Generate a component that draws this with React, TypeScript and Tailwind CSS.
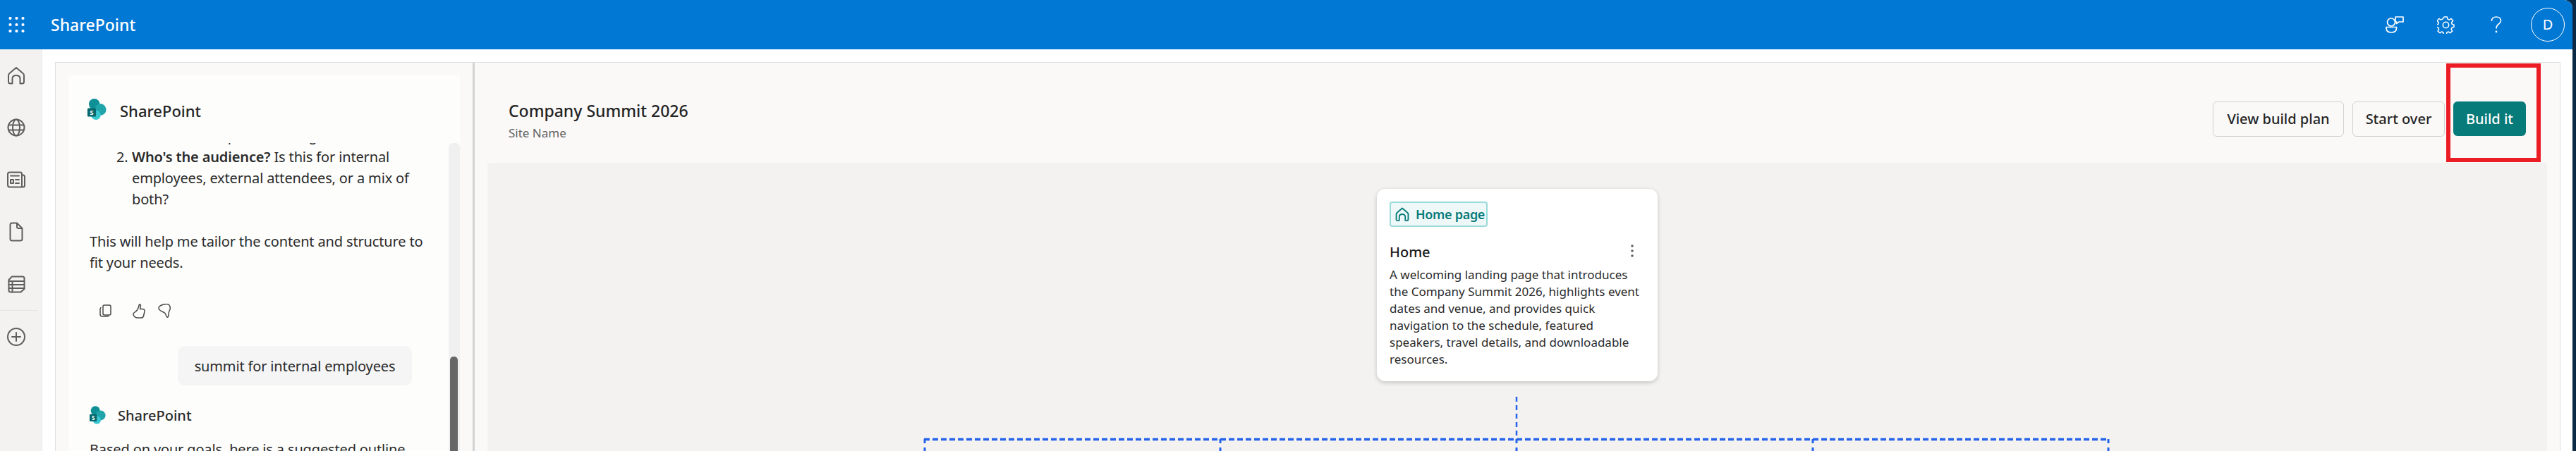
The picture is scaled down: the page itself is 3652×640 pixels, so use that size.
import React from "react";

const Logo = ({ className }: { className: string }) => (
  <svg viewBox="0 0 28 31" className={className}>
    <circle cx="10" cy="8" r="8" fill="#0f8f96" />
    <circle cx="19" cy="16" r="8.5" fill="#1fa4aa" />
    <circle cx="12.5" cy="24" r="7" fill="#38c6d0" />
    <rect x="0" y="14" width="12.5" height="12.5" rx="1.5" fill="#04686c" />
    <text x="6.2" y="24" textAnchor="middle" fontSize="10" fontWeight="700" fill="#fff" fontFamily="'Noto Sans', sans-serif">S</text>
  </svg>
);

const stroke = { fill: "none", stroke: "#605e5c", strokeWidth: 2, strokeLinejoin: "round" as const, strokeLinecap: "round" as const };

const railIcons = [
  <svg key="h" viewBox="0 0 26 26" className="w-[26px] h-[26px]" {...stroke}>
    <path d="M13 2 L22.5 10 Q24 11.2 24 13 V22 Q24 24.5 21.5 24.5 H18.5 V17.5 Q18.5 13 13 13 Q7.5 13 7.5 17.5 V24.5 H4.5 Q2 24.5 2 22 V13 Q2 11.2 3.5 10 Z" />
  </svg>,
  <svg key="g" viewBox="0 0 26 26" className="w-[26px] h-[26px]" {...stroke}>
    <circle cx="13" cy="13" r="11.5" />
    <ellipse cx="13" cy="13" rx="5" ry="11.5" />
    <path d="M2.5 9.5 H23.5 M2.5 16.5 H23.5" />
  </svg>,
  <svg key="n" viewBox="0 0 26 24" className="w-[26px] h-[24px]" {...stroke}>
    <path d="M1 4 Q1 1.5 3.5 1.5 H19 Q21 1.5 21 4 V22.5 H4 Q1 22.5 1 19.5 Z M21 5.5 H23 Q25 5.5 25 8 V20 Q25 22.5 22.5 22.5 H18" />
    <path d="M5 6.5 H17 M12 12 H17 M12 17 H17" />
    <rect x="5" y="12" width="4" height="5" />
  </svg>,
  <svg key="d" viewBox="0 0 20 28" className="w-[20px] h-[28px]" {...stroke}>
    <path d="M4 1.5 H11 L18.5 9 V24 Q18.5 26.5 16 26.5 H4 Q1.5 26.5 1.5 24 V4 Q1.5 1.5 4 1.5 Z M11 1.5 V6.5 Q11 9 13.5 9 H18.5" />
  </svg>,
  <svg key="t" viewBox="0 0 25 25" className="w-[25px] h-[25px]" {...stroke}>
    <path d="M6 1.5 H21 Q23.5 1.5 23.5 4 V19 L18.5 23.5 H4 Q1.5 23.5 1.5 21 V6 Z" />
    <path d="M1.5 8 H23.5 M1.5 13 H23.5 M1.5 18 H23.5 M6.5 8 V23.5" />
  </svg>,
];

const Connector = () => {
  const xs = [2, 421, 841, 1261, 1680];
  return (
    <svg width="1684" height="80" className="shrink-0 mt-[22px]" fill="none" stroke="#2563eb">
      <path d="M841 0 V60" strokeWidth="2.5" strokeDasharray="7 5" />
      <path d="M1 60.5 H1680" strokeWidth="3.5" strokeDasharray="8 4" />
      {xs.map((x) => (
        <path key={x} d={`M${x} 60 V80`} strokeWidth="3" strokeDasharray="6 6" />
      ))}
    </svg>
  );
};

export default function App() {
  return (
    <div className="flex h-[640px] w-[3652px] overflow-hidden bg-[#0b2a45] font-['Noto_Sans',sans-serif] text-[#242424]">
      <div className="flex w-[3647px] flex-col overflow-hidden rounded-tr-[12px] bg-white">
        <header className="flex h-[70px] shrink-0 items-center bg-[#0278d5] text-white">
          <svg viewBox="0 0 24 22" className="ml-[12px] h-[22px] w-[24px]" fill="#fff">
            {[2, 11, 20].map((y) => [2.5, 11.5, 20.5].map((x) => <circle key={`${x}-${y}`} cx={x} cy={y} r="2.1" />))}
          </svg>
          <span className="ml-[36px] text-[23px] font-medium">SharePoint</span>
          <div className="ml-auto flex items-center">
            <svg viewBox="0 0 26 24" className="h-[24px] w-[26px]" fill="none" stroke="#fff" strokeWidth="1.7" strokeLinejoin="round">
              <circle cx="8" cy="8.5" r="5.5" />
              <path d="M1 15.5 H15.5 V17 Q15.5 23 8.2 23 Q1 23 1 17 Z" />
              <path d="M14 1 H25 V8 H19 L15.5 10.5 V8 H14 Z" />
            </svg>
            <svg viewBox="0 0 24 24" className="ml-[47px] h-[25px] w-[25px]" fill="none" stroke="#fff" strokeWidth="1.5" strokeLinejoin="round">
              <path d="M10 1.5 h4 l0.7 3 l2.2 1 l2.7-1.6 l2.6 3 l-2 2.3 l0.5 2.3 l2.8 1 v3 l-2.9 0.9 l-0.9 2.2 l1.5 2.6 l-2.9 2.6 l-2.4-1.7 l-2.2 0.9 l-0.7 2.9 h-3.7 l-0.7-2.9 l-2.2-0.9 l-2.4 1.7 l-2.9-2.6 l1.5-2.6 l-0.9-2.2 l-2.9-0.9 v-3 l2.8-1 l0.5-2.3 l-2-2.3 l2.6-3 l2.7 1.6 l2.2-1 z" transform="translate(0 -0.5) scale(0.98)" />
              <circle cx="12" cy="12" r="4" />
            </svg>
            <svg viewBox="0 0 16 24" className="ml-[51px] h-[24px] w-[16px]" fill="none" stroke="#fff" strokeWidth="1.6" strokeLinecap="round">
              <path d="M1.5 6.5 C1.5 3 4.5 1 8 1 C11.5 1 14.5 3 14.5 6.5 C14.5 11 8 11 8 17" />
              <circle cx="8" cy="22" r="0.6" fill="#fff" />
            </svg>
            <div className="ml-[41px] mr-[11px] flex h-[48px] w-[48px] items-center justify-center rounded-full border border-white text-[20px]">D</div>
          </div>
        </header>

        <div className="flex min-h-0 flex-1">
          <nav className="flex w-[60px] shrink-0 flex-col border-r border-[#edebe9] bg-[#f3f2f1]">
            {railIcons.map((icon, i) => (
              <div key={i} className="flex h-[74px] w-[46px] items-center justify-center">{icon}</div>
            ))}
            <div className="mb-0 h-px w-[53px] bg-[#e6e4e2]" />
            <div className="flex h-[74px] w-[46px] items-center justify-center">
              <svg viewBox="0 0 26 26" className="h-[26px] w-[26px]" {...stroke}>
                <circle cx="13" cy="13" r="12" />
                <path d="M13 7 V19 M7 13 H19" />
              </svg>
            </div>
          </nav>

          <main className="ml-[18px] mr-[17px] mt-[18px] flex min-w-0 flex-1 border border-b-0 border-[#dfdfdf] bg-[#faf9f8]">
            <section className="flex w-[591px] shrink-0 flex-col pl-[18px] pr-[18px] pt-[18px]">
              <div className="flex min-h-0 flex-1 flex-col bg-[#fdfdfb]">
                <div className="flex h-[96px] shrink-0 items-start pl-[27px] pt-[33px]">
                  <Logo className="h-[30px] w-[27px]" />
                  <span className="ml-[19px] mt-[2px] text-[22px] font-medium leading-[30px]">SharePoint</span>
                </div>
                <div className="flex min-h-0 flex-1">
                  <div className="min-w-0 flex-1 overflow-hidden pl-[30px] pr-[24px] text-[20px] leading-[30px] tracking-[-0.15px] text-[#2b2b2b]">
                    <div className="-mt-[25px] pl-[60px] whitespace-nowrap">venue, and help attendees go</div>
                    <ol className="flex pl-[38px]">
                      <li className="flex">
                        <span className="w-[22px] shrink-0">2.</span>
                        <span className="w-[420px]">
                          <strong className="font-semibold">Who's the audience?</strong> Is this for internal employees, external attendees, or a mix of both?
                        </span>
                      </li>
                    </ol>
                    <p className="mt-[30px] w-[490px]">This will help me tailor the content and structure to fit your needs.</p>
                    <div className="mt-[42px] flex h-[22px] items-center pl-[14px]">
                      <svg viewBox="0 0 17 18" className="h-[18px] w-[17px]" fill="none" stroke="#4a4a4a" strokeWidth="1.5" strokeLinejoin="round">
                        <rect x="5" y="1" width="11" height="14" rx="2" />
                        <path d="M2.5 4 Q1 5 1 7 V14 Q1 17 4 17 H11 Q13 17 13.5 15.5" />
                      </svg>
                      <svg viewBox="0 0 18 21" className="ml-[30px] h-[21px] w-[18px]" fill="none" stroke="#4a4a4a" strokeWidth="1.5" strokeLinejoin="round">
                        <path d="M9.5 1 C11 0.5 11.8 2 11.3 4 L10.5 7.5 H14 C16.5 7.5 17.5 9 17 11 L15.5 17.5 C15 19.5 13.5 20 12 20 H7 C4.5 20 1 18 1 15 C1 13 3 12 4.5 11 C7 9.5 8.5 5 9.5 1 Z" />
                      </svg>
                      <svg viewBox="0 0 18 20" className="ml-[18px] h-[20px] w-[18px]" fill="none" stroke="#4a4a4a" strokeWidth="1.5" strokeLinejoin="round">
                        <path d="M1 6.5 C1 3.5 4 2 8 1 C11 0.3 14 0.5 15.5 1.5 C17 3 17.5 6 17 8 C16 10 15 12 15 15 C15 18 14 19.5 13 19 C11.5 18.5 11.5 15 9.5 13 C7 11 1 10 1 6.5 Z" />
                      </svg>
                    </div>
                    <div className="mt-[39px] ml-[125px] flex h-[56px] w-[332px] items-center justify-center rounded-[10px] bg-[#f5f5f5] pt-[2px] whitespace-nowrap">summit for internal employees</div>
                    <div className="mt-[29px] flex h-[26px] items-center">
                      <Logo className="h-[26px] w-[23px]" />
                      <span className="ml-[17px] mt-[2px] text-[20px] font-medium leading-[26px] tracking-normal">SharePoint</span>
                    </div>
                    <p className="mt-[21px] w-[460px]">Based on your goals, here is a suggested outline for your site.</p>
                  </div>
                  <div className="relative w-[16px] shrink-0 rounded-t-[6px] bg-[#f0f0f0]">
                    <div className="absolute left-[2px] right-[3px] top-[303px] bottom-0 rounded-t-[5px] bg-[#666666]" />
                  </div>
                </div>
              </div>
            </section>
            <div className="w-[3px] shrink-0 bg-[#d2d2d2]" />
            <section className="flex min-w-0 flex-1 flex-col">
              <div className="flex h-[142px] shrink-0 items-start justify-between">
                <div className="ml-[48px] mt-[52px]">
                  <h1 className="text-[23px] font-medium leading-[32px]">Company Summit 2026</h1>
                  <p className="mt-[1px] text-[17px] leading-[30px] text-[#616161]">Site Name</p>
                </div>
                <div className="mr-[48px] mt-[55px] flex items-start gap-[12px] text-[20px] font-medium">
                  <button className="flex h-[50px] w-[186px] items-center justify-center rounded-[6px] border border-[#d1d1d1] bg-[#faf9f8]">View build plan</button>
                  <button className="flex h-[50px] w-[131px] items-center justify-center rounded-[6px] border border-[#d1d1d1] bg-[#faf9f8]">Start over</button>
                  <div className="relative">
                    <button className="flex h-[49px] w-[103px] items-center justify-center rounded-[6px] bg-[#077a7a] text-white">Build it</button>
                    <div className="absolute left-[-10px] top-[-54px] h-[140px] w-[134px] border-[6px] border-[#ec1c24]" />
                  </div>
                </div>
              </div>
              <div className="mx-[18px] flex min-h-0 flex-1 flex-col items-center overflow-hidden rounded-t-[4px] bg-[#f3f2f1]">
                <article className="mt-[37px] h-[273px] w-[398px] shrink-0 rounded-[12px] bg-white px-[18px] pt-[18px] shadow-[0_2px_6px_rgba(0,0,0,0.2)]">
                  <div className="flex h-[36px] w-[139px] items-center rounded-[4px] border-2 border-[#9adada] bg-[#eef8f8] pl-[6px] text-[18px] font-semibold tracking-[-0.3px] text-[#077a7a]">
                    <svg viewBox="0 0 26 26" className="h-[20px] w-[20px]" fill="none" stroke="#077a7a" strokeWidth="2.4" strokeLinejoin="round">
                      <path d="M13 2 L22.5 10 Q24 11.2 24 13 V22 Q24 24.5 21.5 24.5 H18.5 V17.5 Q18.5 13 13 13 Q7.5 13 7.5 17.5 V24.5 H4.5 Q2 24.5 2 22 V13 Q2 11.2 3.5 10 Z" />
                    </svg>
                    <span className="ml-[9px]">Home page</span>
                  </div>
                  <div className="mt-[19px] flex h-[34px] items-center justify-between pr-[16px]">
                    <h2 className="text-[20px] font-medium text-[#1a1a1a]">Home</h2>
                    <svg viewBox="0 0 4 18" className="h-[18px] w-[4px] -translate-y-[2px]" fill="#616161">
                      <circle cx="2" cy="2" r="1.8" /><circle cx="2" cy="9" r="1.8" /><circle cx="2" cy="16" r="1.8" />
                    </svg>
                  </div>
                  <p className="mt-[3px] w-[362px] text-[17px] leading-[24px] text-[#2b2b2b]">
                    A welcoming landing page that introduces the Company Summit 2026, highlights event dates and venue, and provides quick navigation to the schedule, featured speakers, travel details, and downloadable resources.
                  </p>
                </article>
                <Connector />
              </div>
            </section>
          </main>
        </div>
      </div>
    </div>
  );
}
